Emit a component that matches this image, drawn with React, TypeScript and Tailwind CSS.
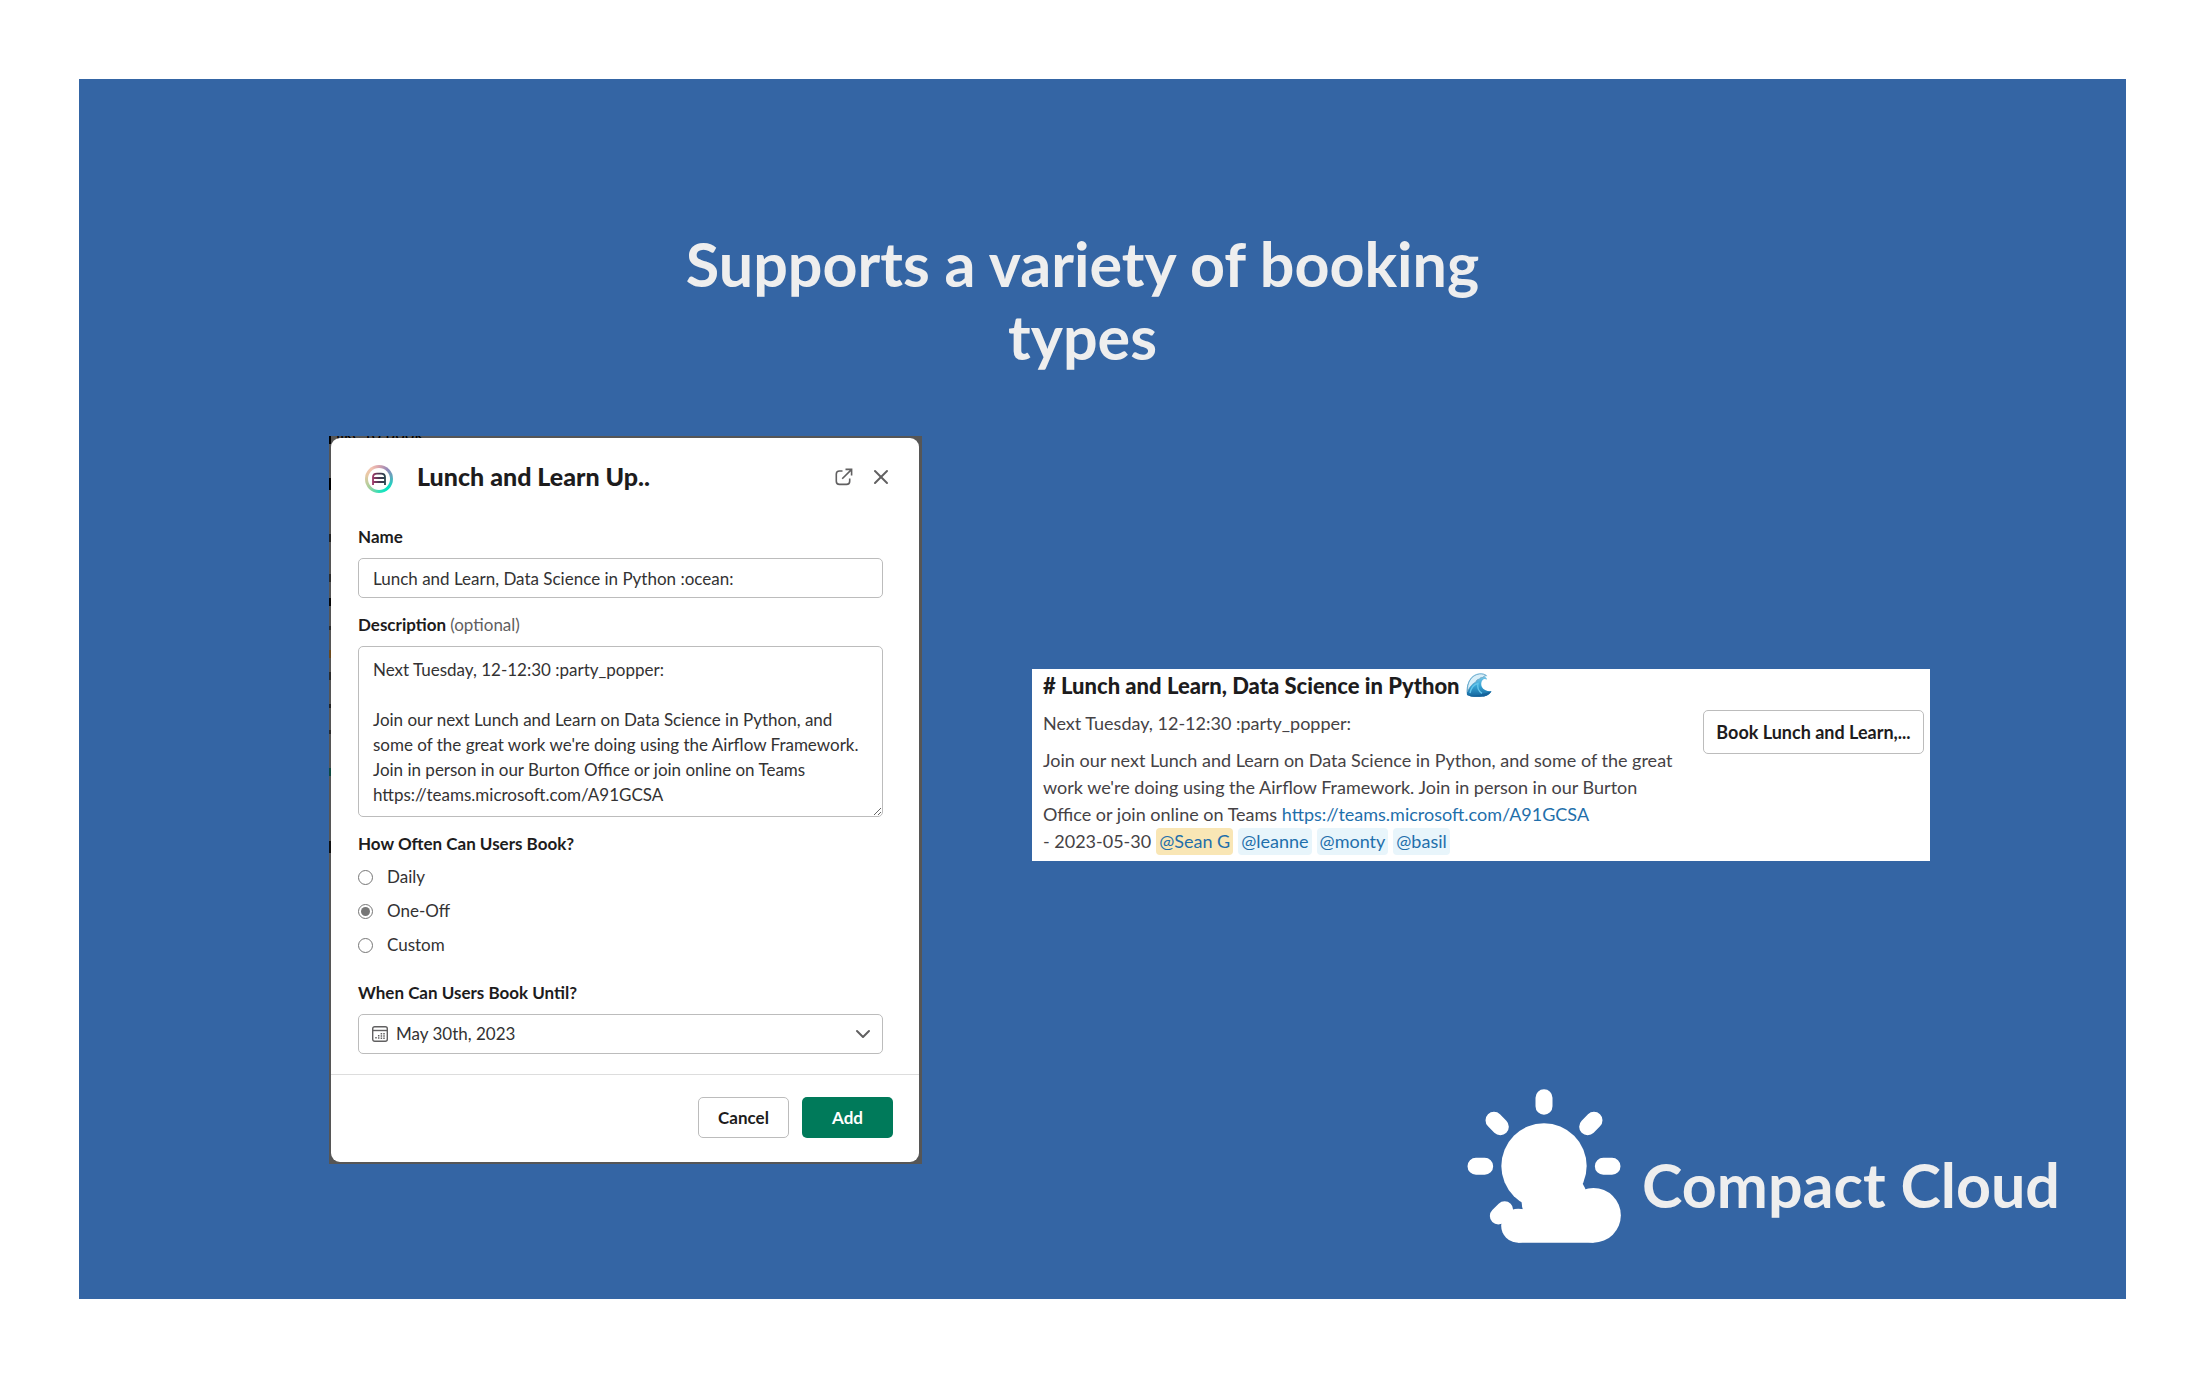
import React from 'react';
import { ChevronDown, X } from 'lucide-react';

const description = `Next Tuesday, 12-12:30 :party_popper:

Join our next Lunch and Learn on Data Science in Python, and some of the great work we're doing using the Airflow Framework. Join in person in our Burton Office or join online on Teams https://teams.microsoft.com/A91GCSA`;

const frequencies = ['Daily', 'One-Off', 'Custom'];

const mentions = ['@leanne', '@monty', '@basil'];

// slivers of the dimmed page that show past the left edge of the dialog
const slivers = [
'top-0 h-2 bg-black',
'top-[42px] h-3 bg-black',
'top-[98px] h-2 bg-black/60',
'top-[138px] h-2 bg-black/50',
'top-[162px] h-2 bg-black/90',
'top-[190px] h-1 bg-black/50',
'top-[214px] h-2 bg-[#6b4a1e]',
'top-[236px] h-2 bg-black/50',
'top-[268px] h-1 bg-black/60',
'top-[294px] h-1 bg-black/50',
'top-[332px] h-2 bg-[#0f4a40]',
'top-[405px] h-3 bg-black/80'];


function AppIcon() {
  return (
    <div className="w-7 h-7 mt-1 rounded-full p-[3px] bg-[conic-gradient(from_0deg,#d9a3ad,#8f86b8_12%,#5fa9bd_22%,#00e6c3_38%,#2fe0b8_50%,#a9cf9a_64%,#e8c9a4_80%,#f3c3b0_90%,#d9a3ad)]">
      <div className="w-full h-full rounded-full bg-white flex items-center justify-center">
        <svg className="w-4 h-4" viewBox="0 0 16 16" fill="none" strokeWidth="1.8">
          <defs>
            <linearGradient id="shelf" x1="1" y1="0" x2="15" y2="0" gradientUnits="userSpaceOnUse">
              <stop offset="0" stopColor="#a83a6c" />
              <stop offset="0.5" stopColor="#4a3550" />
              <stop offset="1" stopColor="#25474f" />
            </linearGradient>
          </defs>
          <g stroke="url(#shelf)">
            <path d="M2 14V6C2 3.800 3.500 2.600 6 2.600h4c2.500 0 4 1.200 4 3.400V14" />
            <path d="M2 7.010L14 7M2 11.010L14 11" />
          </g>
        </svg>
      </div>
    </div>);

}

function CalendarIcon() {
  return (
    <svg className="w-4 h-4" viewBox="0 0 16 16" fill="none" stroke="#616061">
      <rect x="0.7" y="0.7" width="14.6" height="14.6" rx="2" strokeWidth="1.4" />
      <path d="M1 4.500h14" strokeWidth="1.4" />
      <path d="M4 11v2M6.700 9v4M9.400 7v6M12 7v6" strokeWidth="1.5" strokeDasharray="1.500 0.750" />
    </svg>);

}

function OpenIcon() {
  return (
    <svg className="w-[18px] h-[18px]" viewBox="0 0 18 18" fill="none" stroke="#616061" strokeWidth="1.6">
      <path d="M7.5 3H4.5C2.5 3 1.3 4.2 1.3 6v7.2c0 2 1.2 3.2 3.2 3.2h7c2 0 3.2-1.2 3.2-3.2V10.5" />
      <path d="M10.5 1.4h6.1v6.1M16.4 1.6L7.2 10.8" />
    </svg>);

}

function WaveEmoji() {
  return (
    <svg className="w-[26px] h-[26px]" viewBox="0 0 26 26" role="img" aria-label="ocean">
      <defs>
        <linearGradient id="wave" x1="0" y1="0" x2="0" y2="1">
          <stop offset="0" stopColor="#8fd3ef" />
          <stop offset="0.55" stopColor="#35a3d4" />
          <stop offset="1" stopColor="#14639b" />
        </linearGradient>
      </defs>
      <path
        d="M1 23C-.5 12 4 2 14 1.200c3-.3 6 .8 7.500 3-1.500-.4-2.600-.2-3.300.4 1.800.5 2.700 1.600 2.800 3-1.700-1-3.400-.8-4.300.3-1.500 1.700-2 4.500-.8 7 1.300 2.700 5 4.600 9.600 4.300-1 2.600-4.500 4.900-9 5.400C10 25.200 4 24.800 1 23z"
        fill="url(#wave)" />
      <path
        d="M1.400 20C1 11 5 3 13.500 2c3-.3 5.500.4 6.800 1.800-2-.2-3 .6-3.300 1.700-1.700-.4-3 .3-3.600 1.600-2 .2-3.200 1.300-3.600 3C7 11.500 3.500 14.500 1.400 20z"
        fill="#d8eff9" stroke="#6b9fc0" strokeWidth="0.7" />
      <path d="M4 21c1-5 4-8.500 8-9.500-1 4 .5 7.500 4 9.800" fill="none" stroke="#63c4ea" strokeWidth="1.400" />
      <path d="M1 23c4 1.300 10 1 15-1 3-.6 6-1.500 9.200-2.800-1 2.600-4.500 4.900-9 5.400C10 25.200 4 24.800 1 23z" fill="#14639b" />
    </svg>);

}

function CloudLogo() {
  return (
    <svg className="w-[154px] h-[154px] shrink-0" viewBox="50 57 461 462" fill="#fff" stroke="none">
      <circle cx="280.500" cy="288" r="128" />
      <g stroke="#fff" strokeWidth="51" strokeLinecap="round">
        <path d="M280.500 83v26M76.500 288.500h26M458.500 288.500h26" />
        <path d="M130.500 151l19 19M430.500 151l-19 19M162.500 419l-19 19" />
      </g>
      <circle cx="312" cy="392" r="99" />
      <circle cx="429" cy="436" r="82" />
      <circle cx="203" cy="467" r="51" />
      <path d="M203 418h226v100H203z" />
    </svg>);

}

function BookingModal() {
  return (
    <div className="relative w-[593px] shrink-0 bg-[#565656] p-[2px] pr-[3px] overflow-hidden">
      <div aria-hidden="true">
        <div className="absolute -top-3 left-[7px] leading-5 text-black">like to book</div>
        {slivers.map((sliver) =>
        <div key={sliver} className={`absolute left-0 w-[2px] ${sliver}`}></div>
        )}
      </div>
      <form className="relative bg-white rounded-[9px]">
        <header className="flex items-center h-[78px] pl-[34px] pr-[26px]">
          <AppIcon />
          <h2 className="ml-6 pb-[2px] flex-1 text-[25px] leading-8 font-black">Lunch and Learn Up..</h2>
          <button type="button" aria-label="Open in new window">
            <OpenIcon />
          </button>
          <button type="button" aria-label="Close" className="ml-4">
            <X className="w-6 h-6 text-[#616061]" strokeWidth={2} />
          </button>
        </header>

        <div className="pl-[27px] pr-9 pt-[9px] pb-5 border-b border-[#dddddd]">
          <label htmlFor="name" className="block font-bold leading-6 mb-[9px]">Name</label>
          <input
            id="name"
            defaultValue="Lunch and Learn, Data Science in Python :ocean:"
            className="block w-full h-10 px-[14px] border border-[#bcbcbc] rounded-[5px] text-[#333233]" />

          <label htmlFor="description" className="block font-bold leading-6 mt-[15px] mb-[9px]">
            Description <span className="font-normal text-[#616061]">(optional)</span>
          </label>
          <textarea
            id="description"
            defaultValue={description}
            className="block w-full h-[171px] px-[14px] py-[10px] leading-[25px] border border-[#bcbcbc] rounded-[5px] resize overflow-hidden text-[#333233]" />

          <fieldset className="mt-[15px]">
            <legend className="font-bold leading-6 mb-1">How Often Can Users Book?</legend>
            {frequencies.map((item) =>
            <label key={item} className="flex items-center h-[34px] text-[#333233]">
                <input
                type="radio"
                name="frequency"
                defaultChecked={item === 'One-Off'}
                className="w-[15px] h-[15px] mr-[14px] accent-[#767676]" />

                {item}
              </label>
            )}
          </fieldset>

          <label htmlFor="until" className="block font-bold leading-6 mt-[19px] mb-[9px]">When Can Users Book Until?</label>
          <div className="relative">
            <select
              id="until"
              className="appearance-none block w-full h-10 pl-[37px] pr-10 border border-[#bcbcbc] rounded-[5px] bg-white text-[#333233]">
              <option>May 30th, 2023</option>
            </select>
            <div className="absolute inset-y-0 left-[14px] flex items-center pointer-events-none">
              <CalendarIcon />
            </div>
            <ChevronDown className="absolute right-2 top-2 w-6 h-6 text-[#616061] pointer-events-none" />
          </div>
        </div>

        <footer className="flex justify-end gap-[13px] pt-[22px] pb-6 pr-[26px]">
          <button type="button" className="w-[91px] h-[41px] border border-[#bcbcbc] rounded-[5px] font-bold">Cancel</button>
          <button type="submit" className="w-[91px] h-[41px] rounded-[5px] font-bold bg-[#007a5a] text-white">Add</button>
        </footer>
      </form>
    </div>);

}

function BookingMessage() {
  return (
    <article className="flex items-start bg-white pl-[11px] pr-[6px] pb-[6px] text-[18px] leading-[27px] text-[#454245]">
      <div className="flex-1">
        <h3 className="flex items-center gap-[6px] h-8 text-[22px] font-black text-[#1d1c1d]">
          # Lunch and Learn, Data Science in Python <WaveEmoji />
        </h3>
        <p className="mt-[9px]">Next Tuesday, 12-12:30 :party_popper:</p>
        <p className="mt-[10px]">
          Join our next Lunch and Learn on Data Science in Python, and some of the great work we're
          doing using the Airflow Framework. Join in person in our Burton Office or join online on
          Teams <a href="#" className="text-[#1f6fab]">https://teams.microsoft.com/A91GCSA</a>
        </p>
        <p className="flex gap-[5px]">
          - 2023-05-30
          <a href="#" className="px-[3px] rounded bg-[#f9e6b5] text-[#1f6fab]">@Sean G</a>
          {mentions.map((name) =>
          <a key={name} href="#" className="px-[3px] rounded bg-[#e8f5fb] text-[#1f6fab]">{name}</a>
          )}
        </p>
      </div>
      <button
        type="button"
        className="mt-[41px] ml-5 w-[221px] h-11 shrink-0 border border-[#bcbcbc] rounded-[5px] font-bold text-[#1d1c1d]">
        Book Lunch and Learn,...
      </button>
    </article>);

}

export default function App() {
  return (
    <div className="min-h-screen bg-white p-[79px] font-['Lato',sans-serif] text-[17px] text-[#1d1c1d]">
      <main className="bg-[#3465a4] pt-[148px] pb-14">
        <h1 className="max-w-[850px] mx-auto pr-10 text-center text-[61px] leading-[73px] font-bold text-[#eeeeee]">
          Supports a variety of booking types
        </h1>
        <div className="flex items-start mt-[63px] pl-[250px]">
          <BookingModal />
          <div className="flex-1 ml-[110px]">
            <div className="mt-[233px] mr-[196px]">
              <BookingMessage />
            </div>
            <div className="flex items-center justify-end gap-[21px] mt-[228px] mr-[66px]">
              <CloudLogo />
              <p className="mt-9 text-[61px] leading-[73px] font-bold text-[#eeeeee]">Compact Cloud</p>
            </div>
          </div>
        </div>
      </main>
    </div>);

}
